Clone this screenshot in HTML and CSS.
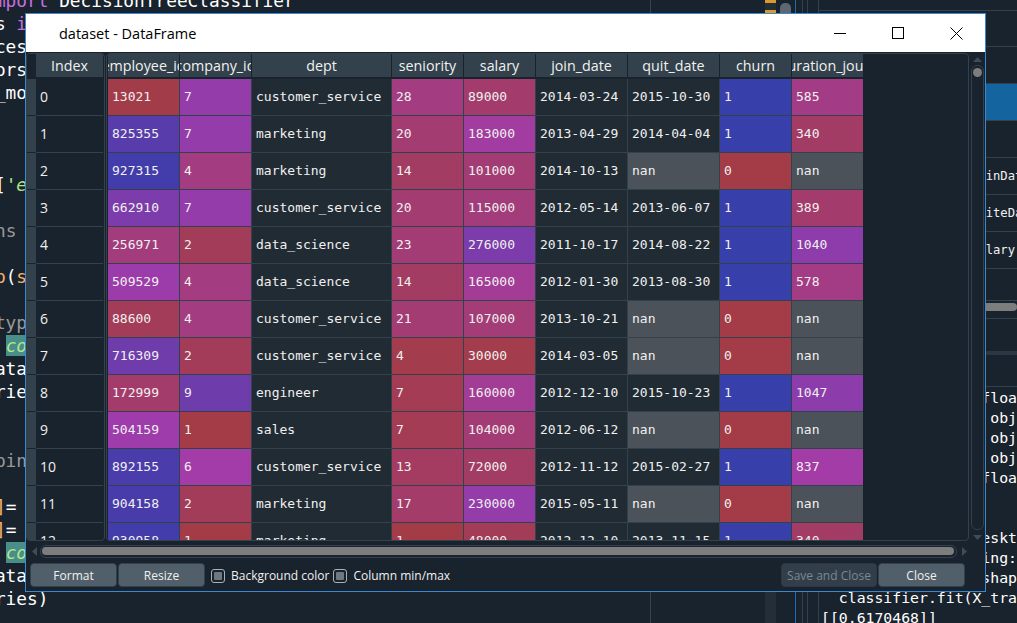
FILE: index.html
```html
<!DOCTYPE html>
<html>
<head>
<meta charset="utf-8">
<title>dataset - DataFrame</title>
<link rel="stylesheet" href="styles.css">
</head>
<body>
<div class="ide">
  <div class="editor">
    <div class="code">
      <div class="ln"><span class="kw">import</span> DecisionTreeClassifier</div>
      <div class="ln">cs <span class="kw">import</span> confusion_matrix</div>
      <div class="ln">rces</div>
      <div class="ln">tors</div>
      <div class="ln">l_mo</div>
      <div class="ln"> </div>
      <div class="ln"> </div>
      <div class="ln"> </div>
      <div class="ln">d[<span class="str">'e</span></div>
      <div class="ln"> </div>
      <div class="ln"> <span class="cm">ns</span></div>
      <div class="ln"> </div>
      <div class="ln"><span class="bi">op</span>(<span class="bi">s</span></div>
      <div class="ln"> </div>
      <div class="ln"><span class="cm">ttyp</span></div>
      <div class="ln">  <span class="occ">columns</span></div>
      <div class="ln">data</div>
      <div class="ln">xrie</div>
      <div class="ln"> </div>
      <div class="ln"> </div>
      <div class="ln"><span class="cm">ppin</span></div>
      <div class="ln"> </div>
      <div class="ln">x<span class="bi">]</span>= </div>
      <div class="ln">x<span class="bi">]</span>= </div>
      <div class="ln">  <span class="occ">columns</span></div>
      <div class="ln">data</div>
      <div class="ln">eries)</div>
    </div>
  </div>
  <div class="split">
    <div class="flags"><i class="flag"></i><i class="flag f2"></i></div>
    <div class="sgap4"></div>
    <div class="escroll"><div class="ehandle"></div></div>
    <div class="sgap4"></div>
    <div class="vline blue"></div>
    <div class="sgap6"></div>
    <div class="vline"></div>
    <div class="sgap4"></div>
    <div class="vline"></div>
    <div class="sgap10"></div>
    <div class="vline"></div>
  </div>
  <div class="rightpane">
    <div class="vtop"></div>
    <div class="vhead"></div>
    <div class="vrow"></div>
    <div class="vrow sel"></div>
    <div class="vrow"></div>
    <div class="vrow"><span class="vval">JoinDate</span></div>
    <div class="vrow"><span class="vval">WriteDate</span></div>
    <div class="vrow"><span class="vval">salary</span></div>
    <div class="vrow last"></div>
    <div class="vhscroll"><div class="vhhandle"></div></div>
    <div class="vtool"></div>
    <div class="vband"></div>
    <div class="vtool2"></div>
    <div class="console">
      <div class="cl">employee_id       float64</div>
      <div class="cl">dept               object</div>
      <div class="cl">join_date          object</div>
      <div class="cl">quit_date          object</div>
      <div class="cl">duration_jours    float64</div>
      <div class="cl">dtype: object</div>
      <div class="cl"> </div>
      <div class="cl">runfile('C:/User/Desktop/ml.py')</div>
      <div class="cl">DataConversionWarning: A column-vector y</div>
      <div class="cl">1d array expected shape of y</div>
      <div class="cl">  classifier.fit(X_train, y_train)</div>
      <div class="cl">[[0.6170468]]</div>
    </div>
  </div>
</div>

<div class="dialog">
  <div class="titlebar">
    <div class="title">dataset - DataFrame</div>
    <div class="winbtn"><svg width="12" height="1" viewBox="0 0 12 1"><rect width="12" height="1" fill="#000"/></svg></div>
    <div class="winbtn"><svg width="12" height="12" viewBox="0 0 12 12"><rect x="0.5" y="0.5" width="11" height="11" fill="none" stroke="#000" stroke-width="1"/></svg></div>
    <div class="winbtn"><svg width="13" height="13" viewBox="0 0 13 13"><path d="M0.5 0.5L12.5 12.5M12.5 0.5L0.5 12.5" stroke="#000" stroke-width="1" fill="none"/></svg></div>
  </div>
  <div class="body">
    <div class="tablerow">
      <div class="idxframe">
        <div class="idxhead"><div class="corner"></div><div class="hcell idxh">Index</div></div>
        <div class="idxrows">
          <div class="irow"><div class="vh"></div><div class="icell">0</div></div>
          <div class="irow"><div class="vh"></div><div class="icell">1</div></div>
          <div class="irow"><div class="vh"></div><div class="icell">2</div></div>
          <div class="irow"><div class="vh"></div><div class="icell">3</div></div>
          <div class="irow"><div class="vh"></div><div class="icell">4</div></div>
          <div class="irow"><div class="vh"></div><div class="icell">5</div></div>
          <div class="irow"><div class="vh"></div><div class="icell">6</div></div>
          <div class="irow"><div class="vh"></div><div class="icell">7</div></div>
          <div class="irow"><div class="vh"></div><div class="icell">8</div></div>
          <div class="irow"><div class="vh"></div><div class="icell">9</div></div>
          <div class="irow"><div class="vh"></div><div class="icell">10</div></div>
          <div class="irow"><div class="vh"></div><div class="icell">11</div></div>
          <div class="irow"><div class="vh"></div><div class="icell">12</div></div>
        </div>
      </div>
      <div class="dataframe">
        <div class="hgrid">
          <div class="hcell"><span>employee_id</span></div>
          <div class="hcell"><span>company_id</span></div>
          <div class="hcell"><span>dept</span></div>
          <div class="hcell"><span>seniority</span></div>
          <div class="hcell"><span>salary</span></div>
          <div class="hcell"><span>join_date</span></div>
          <div class="hcell"><span>quit_date</span></div>
          <div class="hcell"><span>churn</span></div>
          <div class="hcell"><span>duration_jours</span></div>
        </div>
        <div class="grid">
          <div class="c n" style="--h:355">13021</div><div class="c n" style="--h:292">7</div><div class="c s">customer_service</div><div class="c n" style="--h:324">28</div><div class="c n" style="--h:335">89000</div><div class="c s">2014-03-24</div><div class="c s">2015-10-30</div><div class="c n" style="--h:238">1</div><div class="c n" style="--h:321">585</div>
          <div class="c n" style="--h:258">825355</div><div class="c n" style="--h:292">7</div><div class="c s">marketing</div><div class="c n" style="--h:333">20</div><div class="c n" style="--h:306">183000</div><div class="c s">2013-04-29</div><div class="c s">2014-04-04</div><div class="c n" style="--h:238">1</div><div class="c n" style="--h:339">340</div>
          <div class="c n" style="--h:246">927315</div><div class="c n" style="--h:324">4</div><div class="c s">marketing</div><div class="c n" style="--h:341">14</div><div class="c n" style="--h:331">101000</div><div class="c s">2014-10-13</div><div class="c na">nan</div><div class="c n" style="--h:356">0</div><div class="c na">nan</div>
          <div class="c n" style="--h:278">662910</div><div class="c n" style="--h:292">7</div><div class="c s">customer_service</div><div class="c n" style="--h:333">20</div><div class="c n" style="--h:327">115000</div><div class="c s">2012-05-14</div><div class="c s">2013-06-07</div><div class="c n" style="--h:238">1</div><div class="c n" style="--h:335">389</div>
          <div class="c n" style="--h:326">256971</div><div class="c n" style="--h:346">2</div><div class="c s">data_science</div><div class="c n" style="--h:330">23</div><div class="c n" style="--h:278">276000</div><div class="c s">2011-10-17</div><div class="c s">2014-08-22</div><div class="c n" style="--h:238">1</div><div class="c n" style="--h:288">1040</div>
          <div class="c n" style="--h:296">509529</div><div class="c n" style="--h:324">4</div><div class="c s">data_science</div><div class="c n" style="--h:341">14</div><div class="c n" style="--h:312">165000</div><div class="c s">2012-01-30</div><div class="c s">2013-08-30</div><div class="c n" style="--h:238">1</div><div class="c n" style="--h:322">578</div>
          <div class="c n" style="--h:346">88600</div><div class="c n" style="--h:324">4</div><div class="c s">customer_service</div><div class="c n" style="--h:332">21</div><div class="c n" style="--h:329">107000</div><div class="c s">2013-10-21</div><div class="c na">nan</div><div class="c n" style="--h:356">0</div><div class="c na">nan</div>
          <div class="c n" style="--h:271">716309</div><div class="c n" style="--h:346">2</div><div class="c s">customer_service</div><div class="c n" style="--h:353">4</div><div class="c n" style="--h:353">30000</div><div class="c s">2014-03-05</div><div class="c na">nan</div><div class="c n" style="--h:356">0</div><div class="c na">nan</div>
          <div class="c n" style="--h:336">172999</div><div class="c n" style="--h:270">9</div><div class="c s">engineer</div><div class="c n" style="--h:349">7</div><div class="c n" style="--h:313">160000</div><div class="c s">2012-12-10</div><div class="c s">2015-10-23</div><div class="c n" style="--h:238">1</div><div class="c n" style="--h:287">1047</div>
          <div class="c n" style="--h:297">504159</div><div class="c n" style="--h:356">1</div><div class="c s">sales</div><div class="c n" style="--h:349">7</div><div class="c n" style="--h:330">104000</div><div class="c s">2012-06-12</div><div class="c na">nan</div><div class="c n" style="--h:356">0</div><div class="c na">nan</div>
          <div class="c n" style="--h:250">892155</div><div class="c n" style="--h:302">6</div><div class="c s">customer_service</div><div class="c n" style="--h:342">13</div><div class="c n" style="--h:340">72000</div><div class="c s">2012-11-12</div><div class="c s">2015-02-27</div><div class="c n" style="--h:238">1</div><div class="c n" style="--h:303">837</div>
          <div class="c n" style="--h:249">904158</div><div class="c n" style="--h:346">2</div><div class="c s">marketing</div><div class="c n" style="--h:337">17</div><div class="c n" style="--h:292">230000</div><div class="c s">2015-05-11</div><div class="c na">nan</div><div class="c n" style="--h:356">0</div><div class="c na">nan</div>
          <div class="c n" style="--h:246">930958</div><div class="c n" style="--h:356">1</div><div class="c s">marketing</div><div class="c n" style="--h:356">1</div><div class="c n" style="--h:347">48000</div><div class="c s">2012-12-10</div><div class="c s">2013-11-15</div><div class="c n" style="--h:238">1</div><div class="c n" style="--h:339">340</div>
        </div>
      </div>
      <div class="vscroll">
        <svg class="arr" width="9" height="5" viewBox="0 0 9 5"><path d="M0 5L4.5 0L9 5Z" fill="#3f4b56"/></svg>
        <div class="vgroove"><div class="vhandle"></div></div>
        <svg class="arr" width="9" height="5" viewBox="0 0 9 5"><path d="M0 0L4.5 5L9 0Z" fill="#3f4b56"/></svg>
      </div>
    </div>
    <div class="hscrollrow">
      <svg width="5" height="9" viewBox="0 0 5 9"><path d="M5 0L0 4.5L5 9Z" fill="#3f4b56"/></svg>
      <div class="hgroove"><div class="hhandle"></div></div>
      <svg width="5" height="9" viewBox="0 0 5 9"><path d="M0 0L5 4.5L0 9Z" fill="#3f4b56"/></svg>
    </div>
    <div class="btnrow">
      <div class="btn">Format</div>
      <div class="btn">Resize</div>
      <div class="cb"><div class="cbin"></div></div>
      <div class="cblabel">Background color</div>
      <div class="cb cb2"><div class="cbin"></div></div>
      <div class="cblabel">Column min/max</div>
      <div class="spacer"></div>
      <div class="btn dis">Save and Close</div>
      <div class="btn close">Close</div>
    </div>
  </div>
</div>
</body>
</html>
```

FILE: styles.css
```css
html, body {
  margin: 0;
  padding: 0;
}
body {
  width: 1017px;
  height: 623px;
  overflow: hidden;
  position: relative;
  background: #19232d;
  font-family: "Open Sans", "Noto Sans", sans-serif;
}

/* ---------- background IDE ---------- */
.ide {
  display: flex;
  height: 623px;
}
.editor {
  width: 765px;
  flex: none;
  overflow: hidden;
  background-color: #19232d;
  background-image: linear-gradient(to right, transparent 650px, #38434e 650px, #38434e 651px, transparent 651px);
}
.code {
  margin: -11.5px 0 0 -15.8px;
  font-family: "DejaVu Sans Mono", monospace;
  font-size: 17.8px;
  line-height: 23px;
  color: #ffffff;
}
.ln { height: 23px; white-space: pre; }
.kw { color: #c670e0; }
.str { color: #b0e686; font-style: italic; }
.cm { color: #999999; }
.bi { color: #fab16c; }
.occ { background: #4a8e8a; color: #b8e68a; font-style: italic; }

.split {
  width: 54px;
  flex: none;
  display: flex;
}
.flags {
  width: 11px;
  background: #242e38;
  display: flex;
  flex-direction: column;
}
.flag {
  display: block;
  height: 3px;
  background: #d99a2b;
}
.flag.f2 { margin-top: 7px; }
.sgap4 { width: 4px; }
.sgap6 { width: 6px; }
.sgap10 { width: 10px; }
.escroll { width: 11px; }
.ehandle {
  margin-top: 3px;
  height: 60px;
  border-radius: 5px;
  background: #5e6871;
}
.vline { width: 1px; background: #32414b; }
.vline.blue { background: #1e6bb0; }

.rightpane {
  width: 198px;
  flex: none;
  display: flex;
  flex-direction: column;
  overflow: hidden;
}
.vtop { height: 10px; border-bottom: 1px solid #32414b; flex: none; }
.vhead { height: 35px; border-bottom: 1px solid #32414b; flex: none; }
.vrow {
  height: 36px;
  flex: none;
  border-bottom: 1px solid #32414b;
  display: flex;
  align-items: center;
  font-family: "DejaVu Sans Mono", monospace;
  font-size: 12.2px;
  color: #f0f0f0;
  white-space: pre;
}
.vrow.sel { background: #1464a0; }
.vrow.last { height: 31px; }
.vval { margin-left: 152px; }
.vhscroll { height: 13px; flex: none; padding-top: 2px; box-sizing: border-box; }
.vhhandle { height: 8px; background: #7d7d7d; border-radius: 4px; }
.vtool { height: 32px; flex: none; border-top: 1px solid #32414b; margin-top: 4px; }
.vband { height: 4px; flex: none; background: #2b3843; }
.vtool2 { height: 31px; flex: none; border-bottom: 1px solid #32414b; }
.console {
  padding: 1px 0 0 2px;
  font-family: "DejaVu Sans Mono", monospace;
  font-size: 14.8px;
  line-height: 20px;
  color: #ffffff;
}
.cl { height: 20px; white-space: pre; }

/* ---------- dialog window ---------- */
.dialog {
  position: absolute;
  left: 25px;
  top: 13px;
  width: 959px;
  height: 577px;
  border: 1px solid #3a88d4;
  background: #19232d;
  display: flex;
  flex-direction: column;
}
.titlebar {
  height: 38px;
  flex: none;
  background: #ffffff;
  display: flex;
  align-items: center;
}
.title {
  flex: 1;
  padding-left: 33px;
  font-size: 14.5px;
  color: #000000;
}
.winbtn {
  width: 58px;
  height: 38px;
  display: flex;
  align-items: center;
  justify-content: center;
}
.winbtn svg { display: block; }

.body {
  flex: 1;
  display: flex;
  flex-direction: column;
  padding-top: 1px;
}
.tablerow {
  height: 488px;
  flex: none;
  display: flex;
}

/* index frame */
.idxframe {
  width: 77px;
  height: 486px;
  border: 1px solid #32414b;
  border-radius: 4px;
  overflow: hidden;
  margin-right: 1px;
}
.idxhead {
  display: flex;
  height: 23px;
  margin-bottom: 2px;
}
.corner { width: 9px; background: #19232d; }
.hcell {
  background: #32414b;
  color: #f0f0f0;
  font-size: 14.3px;
  height: 23px;
  display: flex;
  align-items: center;
  justify-content: center;
  overflow: hidden;
  white-space: nowrap;
}
.hcell span { flex: none; }
.idxh { width: 67px; }
.irow { display: flex; height: 37px; }
.vh {
  width: 9px;
  background: #32414b;
  border-bottom: 1px solid #19232d;
  box-sizing: border-box;
}
.icell {
  width: 67px;
  border-bottom: 1px solid #32414b;
  box-sizing: border-box;
  padding-left: 4px;
  line-height: 36px;
  font-size: 14px;
  color: #f0f0f0;
}

/* data frame */
.dataframe {
  width: 860px;
  height: 486px;
  border: 1px solid #32414b;
  border-radius: 4px;
  overflow: hidden;
  padding-left: 1px;
  margin-right: 2px;
}
.hgrid {
  display: grid;
  grid-template-columns: 71px 71px 139px 71px 71px 91px 91px 71px 71px;
  column-gap: 1px;
  width: max-content;
  background: #19232d;
  margin-bottom: 2px;
}
.grid {
  display: grid;
  grid-template-columns: 71px 71px 139px 71px 71px 91px 91px 71px 71px;
  grid-auto-rows: 36px;
  gap: 1px;
  width: max-content;
  background: #32414b;
  padding-bottom: 1px;
}
.c {
  font-family: "DejaVu Sans Mono", monospace;
  font-size: 13px;
  line-height: 36px;
  color: #f0f0f0;
  padding-left: 4px;
  white-space: nowrap;
  overflow: hidden;
  background-color: #19232d;
}
.n {
  background-image: linear-gradient(hsla(var(--h), 100%, 65%, 0.6), hsla(var(--h), 100%, 65%, 0.6));
}
.s { background-color: #212b34; }
.na { background-color: #4b5259; }

/* vertical scrollbar */
.vscroll {
  width: 13px;
  display: flex;
  flex-direction: column;
  align-items: center;
  padding-top: 4px;
}
.arr { display: block; flex: none; }
.vgroove {
  width: 11px;
  height: 461px;
  margin: 3px 0 5px;
  border: 1px solid #32414b;
  border-radius: 6px;
  padding: 2px 0 0 0;
  display: flex;
  justify-content: center;
}
.vhandle {
  width: 9px;
  height: 9px;
  border-radius: 5px;
  background: #7d7d7d;
}

/* horizontal scrollbar */
.hscrollrow {
  height: 14px;
  flex: none;
  margin-top: 3px;
  display: flex;
  align-items: center;
  padding-left: 6px;
}
.hscrollrow svg { display: block; flex: none; }
.hgroove {
  width: 912px;
  height: 11px;
  margin: 0 5px 0 3px;
  border: 1px solid #32414b;
  border-radius: 6px;
  display: flex;
  align-items: center;
  padding: 0 2px 0 1px;
}
.hhandle {
  flex: 1;
  height: 8px;
  border-radius: 4px;
  background: #7d7d7d;
}

/* buttons */
.btnrow {
  height: 24px;
  flex: none;
  margin-top: 5px;
  display: flex;
  align-items: center;
  padding-left: 4px;
  padding-right: 20px;
}
.btn {
  width: 87px;
  height: 24px;
  box-sizing: border-box;
  border: 1px solid #32414b;
  border-radius: 4px;
  background: #505f69;
  color: #f0f0f0;
  font-size: 12px;
  display: flex;
  align-items: center;
  justify-content: center;
  margin-right: 1px;
}
.btn.dis {
  width: 96px;
  background: #323f4a;
  color: #7b8792;
  border-color: #2c3842;
}
.btn.close { margin-right: 0; }
.cb {
  width: 14px;
  height: 14px;
  box-sizing: border-box;
  border: 1px solid #a9b1b8;
  border-radius: 3px;
  padding: 2px;
  margin-left: 5px;
  margin-top: 2px;
}
.cb2 { margin-left: 4px; }
.cbin {
  width: 8px;
  height: 8px;
  background: #6f787f;
  border-radius: 1px;
}
.cblabel {
  margin-left: 6px;
  font-size: 12px;
  color: #f0f0f0;
}
.spacer { flex: 1; }
```
